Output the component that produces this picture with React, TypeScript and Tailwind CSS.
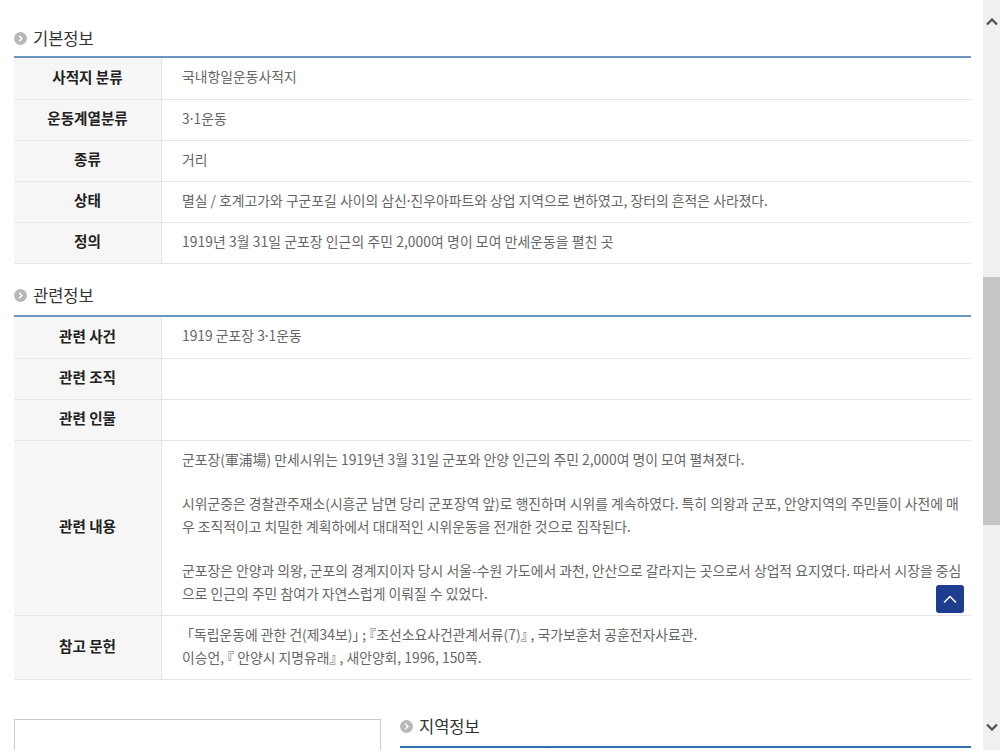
const FONT = '"Noto Sans CJK KR", "Liberation Sans", sans-serif';

function Bullet() {
  return (
    <svg width="13" height="13" viewBox="0 0 13 13" className="shrink-0">
      <circle cx="6.5" cy="6.5" r="6.5" fill="#b8b8b8" />
      <path d="M5.2 3.8 L7.9 6.5 L5.2 9.2" fill="none" stroke="#ffffff" strokeWidth="1.4" />
    </svg>
  );
}

function Heading({ title, className }: { title: string; className: string }) {
  return (
    <div className={`flex items-center gap-[6px] ${className}`}>
      <Bullet />
      <span className="text-[16.5px] leading-[20px] text-[#333333]">{title}</span>
    </div>
  );
}

function Dot() {
  return <span className="mx-[-2px]">·</span>;
}

function Row({ label, h, children }: { label: string; h: string; children?: React.ReactNode }) {
  return (
    <div className={`flex border-b border-[#e6e6e6] ${h}`}>
      <div className="w-[148px] shrink-0 flex items-center justify-center bg-[#f6f6f6] border-r border-[#e6e6e6] pb-[4px] text-[14.6px] font-bold text-[#222222]">
        {label}
      </div>
      <div className="flex-1 min-w-0 flex flex-col justify-center pl-5 pb-[4px] text-[13.85px] text-[#666666] leading-[22.4px] whitespace-nowrap [font-feature-settings:'halt']">
        {children}
      </div>
    </div>
  );
}

export default function App() {
  return (
    <div className="h-[750px] w-[1000px] overflow-hidden flex bg-white" style={{ fontFamily: FONT }}>
      <div className="relative w-[983px] h-[750px] overflow-hidden pl-[14px] pr-[12px]">
        <Heading title="기본정보" className="pt-[28px] h-[56px] pb-[8px]" />
        <div className="border-t-2 border-[#6d95c4]">
          <Row label="사적지 분류" h="h-[42px]">국내항일운동사적지</Row>
          <Row label="운동계열분류" h="h-[41px]"><p>3<Dot />1운동</p></Row>
          <Row label="종류" h="h-[41px]">거리</Row>
          <Row label="상태" h="h-[41px]"><p>멸실 / 호계고가와 구군포길 사이의 삼신<Dot />진우아파트와 상업 지역으로 변하였고, 장터의 흔적은 사라졌다.</p></Row>
          <Row label="정의" h="h-[41px]"><p className="tracking-[0.07px]">1919년 3월 31일 군포장 인근의 주민 2,000여 명이 모여 만세운동을 펼친 곳</p></Row>
        </div>
        <Heading title="관련정보" className="h-[51px] pt-[21px] pb-[10px]" />
        <div className="border-t-2 border-[#6d95c4]">
          <Row label="관련 사건" h="h-[42px]"><p>1919 군포장 3<Dot />1운동</p></Row>
          <Row label="관련 조직" h="h-[41px]" />
          <Row label="관련 인물" h="h-[41px]" />
          <Row label="관련 내용" h="h-[175px]">
            <p>군포장(軍浦場) 만세시위는 1919년 3월 31일 군포와 안양 인근의 주민 2,000여 명이 모여 펼쳐졌다.</p>
            <p className="mt-[22px]">시위군중은 경찰관주재소(시흥군 남면 당리 군포장역 앞)로 행진하며 시위를 계속하였다. 특히 의왕과 군포, 안양지역의 주민들이 사전에 매<br />우 조직적이고 치밀한 계획하에서 대대적인 시위운동을 전개한 것으로 짐작된다.</p>
            <p className="mt-[22px]">군포장은 안양과 의왕, 군포의 경계지이자 당시 서울-수원 가도에서 과천, 안산으로 갈라지는 곳으로서 상업적 요지였다. 따라서 시장을 중심<br />으로 인근의 주민 참여가 자연스럽게 이뤄질 수 있었다.</p>
          </Row>
          <Row label="참고 문헌" h="h-[64px]">
            <p className="pl-[2px]">&nbsp;「독립운동에 관한 건(제34보)」 ; 『조선소요사건관계서류(7)』 , 국가보훈처 공훈전자사료관.</p>
            <p>이승언, 『 안양시 지명유래』 , 새안양회, 1996, 150쪽.</p>
          </Row>
        </div>
        <div className="flex mt-[39px] gap-[19px]">
          <div className="w-[367px] h-[60px] shrink-0 border border-[#cccccc]" />
          <div className="flex-1">
            <Heading title="지역정보" className="h-[27px] pb-[13px]" />
            <div className="border-t-2 border-[#2f6db5] flex h-[10px]">
              <div className="w-[148px] border-r border-[#e6e6e6]" />
            </div>
          </div>
        </div>
        <div className="absolute left-[936px] top-[585px] w-[28px] h-[28px] rounded-[3px] bg-[#1e3d8f] flex items-center justify-center">
          <svg width="14" height="8" viewBox="0 0 14 8">
            <path d="M1 7.5 L7 1.5 L13 7.5" fill="none" stroke="#ffffff" strokeWidth="1.5" />
          </svg>
        </div>
      </div>
      <div className="w-[17px] h-[750px] bg-[#f0f0f0] flex flex-col items-center">
        <div className="h-[44px] shrink-0 flex items-center justify-center">
          <svg width="12" height="8" viewBox="0 0 12 8">
            <path d="M1 6.5 L6 1.5 L11 6.5" fill="none" stroke="#505050" strokeWidth="2.2" />
          </svg>
        </div>
        <div className="w-[17px] h-[248px] shrink-0 bg-[#c6c6c6] mt-[233px]" />
        <div className="h-[46px] shrink-0 flex items-center justify-center mt-auto">
          <svg width="12" height="8" viewBox="0 0 12 8">
            <path d="M1 1.5 L6 6.5 L11 1.5" fill="none" stroke="#505050" strokeWidth="2.2" />
          </svg>
        </div>
      </div>
    </div>
  );
}
